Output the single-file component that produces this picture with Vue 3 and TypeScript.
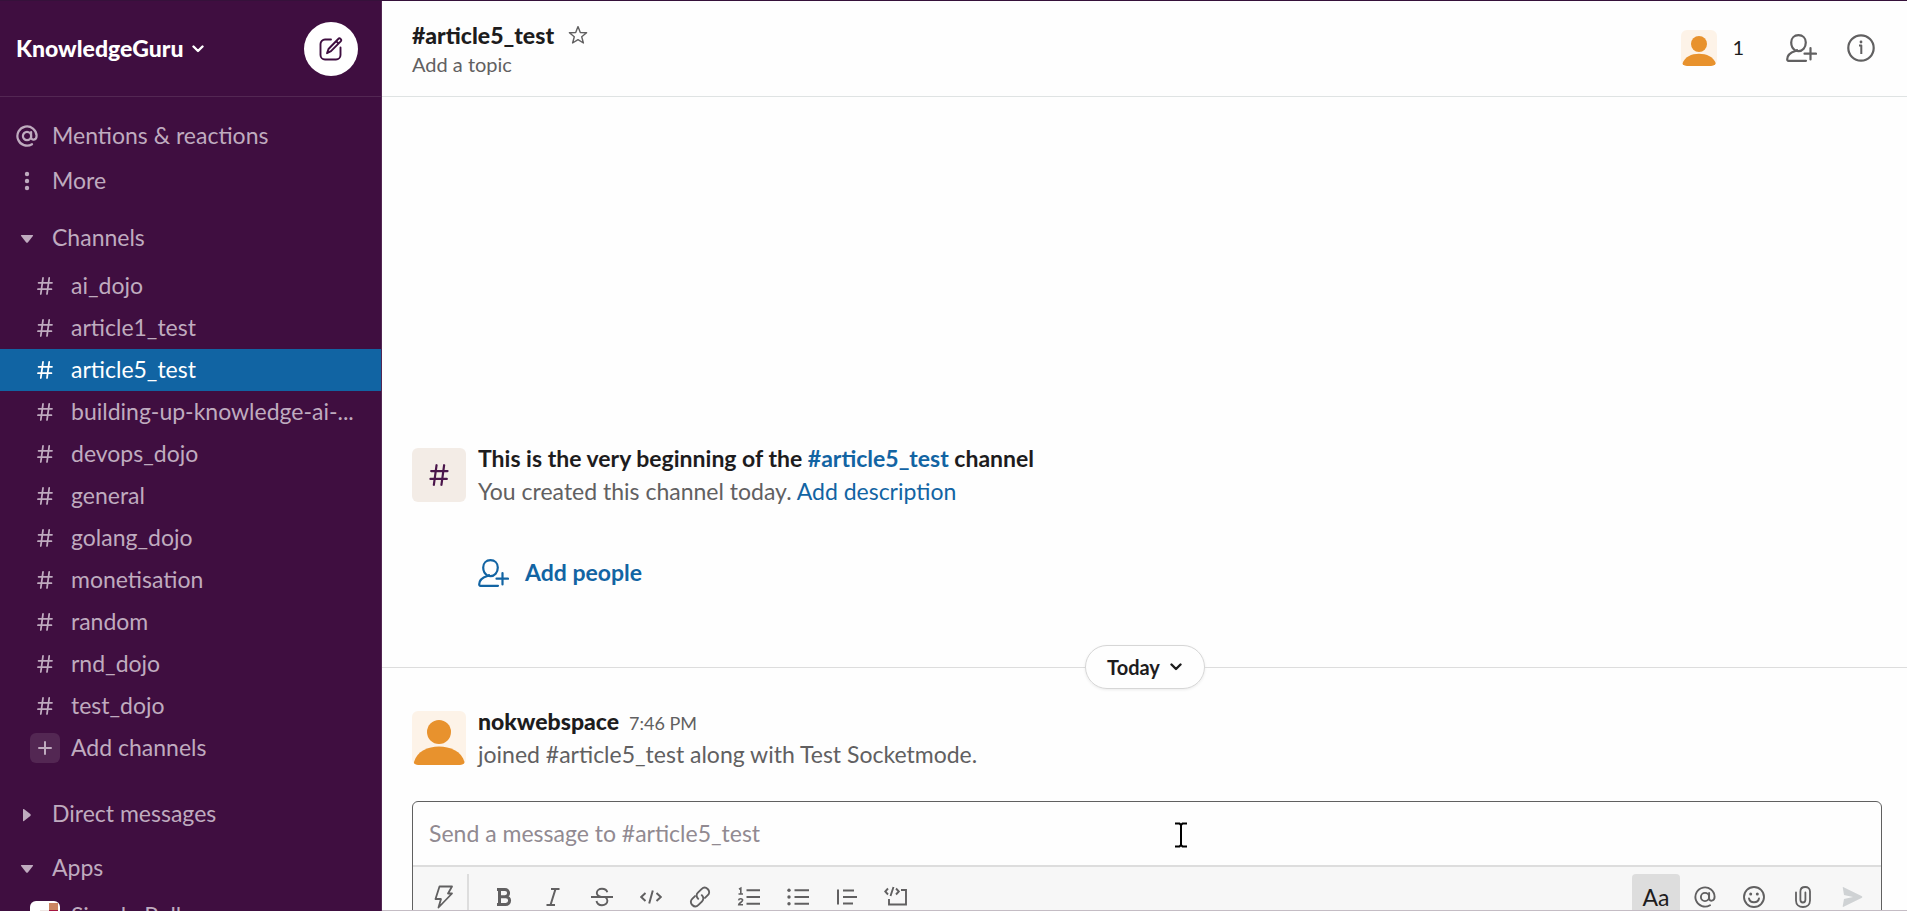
<script setup lang="ts">
import { ref } from 'vue'

interface Channel {
  name: string
  label: string
}

const channels: Channel[] = [
  'ai_dojo',
  'article1_test',
  'article5_test',
  'building-up-knowledge-ai-...',
  'devops_dojo',
  'general',
  'golang_dojo',
  'monetisation',
  'random',
  'rnd_dojo',
  'test_dojo',
].map((label) => ({ name: label.replace(/\W+/g, '-'), label }))

const active = ref('article5_test')
const draft = ref('')
</script>

<template>
  <div class="app">
    <svg class="defs" width="0" height="0" aria-hidden="true">
      <symbol id="hash" viewBox="0 0 16 18">
        <path d="M6 1 3.8 17M12.2 1 10 17M1.6 5.8H15M1 12.2H14.4" fill="none" stroke="currentColor" stroke-linecap="round" />
      </symbol>
      <symbol id="at" viewBox="0 0 22 22">
        <g fill="none" stroke="currentColor" stroke-linecap="round">
          <circle cx="11" cy="11" r="4.1" />
          <path d="M15.1 7v5.2c0 3.6 5.5 3.4 5.5-1.4A9.6 9.6 0 1 0 16 19.2" />
        </g>
      </symbol>
      <symbol id="chevron" viewBox="0 0 12 8">
        <path d="M1.5 1.5 6 6l4.500-4.500" fill="none" stroke="currentColor" stroke-width="2.400" stroke-linecap="round" stroke-linejoin="round" />
      </symbol>
      <symbol id="person-add" viewBox="0 0 31 28">
        <g fill="none" stroke="currentColor" stroke-width="2.200" stroke-linecap="round" stroke-linejoin="round">
          <path d="M20 26.800H2.500c-1 0-1.300-.6-1.300-1.500 0-4 3.300-6.800 8.300-8.300 1-.3 1.400-.6 1.500-1" />
          <path d="M9.500 16.600C6.600 14.800 5.200 11.600 5.200 8.600 5.200 4 8.300 1.200 12.500 1.200s7.300 2.800 7.300 7.400c0 5-3.300 8.600-7.300 8.600-1 0-2-.2-3-.6" />
          <path d="M24.500 14v11.500M18.500 19.700H30" />
        </g>
      </symbol>
      <symbol id="avatar" viewBox="0 0 54 54">
        <path d="M0 0h54v54H0z" fill="#fdf3e8" />
        <circle cx="27" cy="21" r="12" fill="#e8922d" />
        <path d="M2 51c3-11 14-15.500 25-15.500S49.500 40 52.500 51c.3 1.800-.5 3-2 3h-46c-1.700 0-2.800-1.200-2.500-3z" fill="#e8922d" />
      </symbol>
    </svg>

    <aside class="sidebar">
      <header class="side-head">
        <button class="team" type="button">
          KnowledgeGuru
          <svg class="chev"><use href="#chevron" /></svg>
        </button>
        <button class="compose" type="button" aria-label="New message">
          <svg width="24" height="24" viewBox="0 0 24 24" fill="none" stroke="currentColor" stroke-width="1.900" stroke-linecap="round" stroke-linejoin="round">
            <path d="M12 2.500H6A4.500 4.500 0 0 0 1.500 7v11A4.500 4.500 0 0 0 6 22.500h11a4.500 4.500 0 0 0 4.500-4.500v-7.500" />
            <path d="M8 16.200 9.500 12 19.200 2a1.600 1.600 0 0 1 2.500 2.300L12 14.200zM17.200 4.200l2.300 2.300" />
          </svg>
        </button>
      </header>

      <nav class="side-nav" aria-label="Workspace">
        <a class="top-link" href="#mentions">
          <span class="lead"><svg class="at bold" width="22" height="22"><use href="#at" /></svg></span>Mentions &amp; reactions
        </a>
        <a class="top-link" href="#more">
          <span class="lead">
            <svg width="6" height="20" viewBox="0 0 6 20" fill="currentColor"><circle cx="3" cy="3" r="2.200" /><circle cx="3" cy="10" r="2.200" /><circle cx="3" cy="17" r="2.200" /></svg>
          </span>More
        </a>

        <section class="group">
          <button class="group-head" type="button" aria-expanded="true">
            <span class="lead"><svg width="14" height="10" viewBox="0 0 14 10"><path d="M1.500 1h11q1 0 .4.900L8 8.300q-1 1-2 0L1.100 1.900Q.5 1 1.500 1z" fill="currentColor" /></svg></span>Channels
          </button>
          <ul class="rows">
            <li v-for="c in channels" :key="c.name">
              <a class="row" :class="{ on: c.name === active }" :href="'#' + c.name" @click="active = c.name">
                <span class="mark"><svg class="hash" width="16" height="18"><use href="#hash" /></svg></span>{{ c.label }}
              </a>
            </li>
            <li>
              <button class="row" type="button">
                <span class="mark plus"><svg width="14" height="14" viewBox="0 0 14 14"><path d="M7 1v12M1 7h12" stroke="currentColor" stroke-width="2" stroke-linecap="round" /></svg></span>Add channels
              </button>
            </li>
          </ul>
        </section>

        <section class="group later">
          <button class="group-head" type="button" aria-expanded="false">
            <span class="lead"><svg width="10" height="14" viewBox="0 0 10 14"><path d="M1 1.500v11q0 1 .9.400L8.300 8q1-1 0-2L1.900 1.100Q1 .5 1 1.500z" fill="currentColor" /></svg></span>Direct messages
          </button>
        </section>

        <section class="group apps">
          <button class="group-head" type="button" aria-expanded="true">
            <span class="lead"><svg width="14" height="10" viewBox="0 0 14 10"><path d="M1.500 1h11q1 0 .4.900L8 8.300q-1 1-2 0L1.100 1.900Q.5 1 1.500 1z" fill="currentColor" /></svg></span>Apps
          </button>
          <ul class="rows">
            <li>
              <a class="row" href="#simple-poll">
                <span class="mark poll">
                  <svg width="30" height="30" viewBox="0 0 30 30"><path d="M0 0h30v30H0z" fill="#fff" /><path d="M19 2h9v7h-9z" fill="#cb8562" /><path d="M19 9h9v19h-9z" fill="#a51540" /><path d="M10 9h9v19h-9z" fill="#eee6e2" /></svg>
                </span>Simple Poll
              </a>
            </li>
          </ul>
        </section>
      </nav>
    </aside>

    <main class="main">
      <header class="head">
        <div class="head-text">
          <div class="head-line">
            <h1 class="title">#article5_test</h1>
            <button class="star" type="button" aria-label="Star channel">
              <svg width="20" height="20" viewBox="0 0 20 20"><path d="m10 1.600 2.300 5.900 6.300.3-4.900 4 1.700 6.200L10 14.600 4.600 18l1.700-6.200-4.900-4 6.300-.3z" fill="none" stroke="currentColor" stroke-width="1.400" stroke-linejoin="round" /></svg>
            </button>
          </div>
          <button class="topic" type="button">Add a topic</button>
        </div>
        <button class="members" type="button" aria-label="1 member">
          <svg class="avatar" width="36" height="36"><use href="#avatar" /></svg>1
        </button>
        <button class="head-icon invite" type="button" aria-label="Add people to channel">
          <svg width="31" height="28"><use href="#person-add" /></svg>
        </button>
        <button class="head-icon" type="button" aria-label="Channel details">
          <svg width="28" height="28" viewBox="0 0 28 28" fill="none" stroke="currentColor"><circle cx="14" cy="14" r="12.700" stroke-width="2.200" /><path d="M12 11.500h2.300v8.500" stroke-width="2" stroke-linejoin="round" /><circle cx="14" cy="8" r="1.400" fill="currentColor" stroke="none" /></svg>
        </button>
      </header>

      <div class="feed">
        <section class="entry">
          <span class="tile"><svg class="hash" width="20" height="22"><use href="#hash" /></svg></span>
          <div class="entry-text">
            <h2 class="lead-line">This is the very beginning of the <a href="#article5_test">#article5_test</a> channel</h2>
            <p class="muted">You created this channel today. <a href="#description">Add description</a></p>
            <button class="add-people" type="button"><svg width="31" height="28"><use href="#person-add" /></svg>Add people</button>
          </div>
        </section>

        <div class="divider">
          <button class="day" type="button">Today <svg class="chev"><use href="#chevron" /></svg></button>
        </div>

        <article class="entry">
          <svg class="avatar" width="54" height="54"><use href="#avatar" /></svg>
          <div class="entry-text">
            <div class="who"><strong>nokwebspace</strong><time>7:46 PM</time></div>
            <p class="muted">joined #article5_test along with Test Socketmode.</p>
          </div>
        </article>
      </div>

      <div class="dock">
        <form class="composer" @submit.prevent>
          <input v-model="draft" class="field" type="text" placeholder="Send a message to #article5_test" aria-label="Message #article5_test" />
          <svg class="ibeam" width="14" height="26" viewBox="0 0 14 26" aria-hidden="true"><path d="M1 1.500h4.500L7 3l1.500-1.500H13M7 3v20M1 24.500h4.500L7 23l1.500 1.500H13" fill="none" stroke="#000" stroke-width="2" /></svg>
          <div class="tools">
            <button class="tool bolt" type="button" aria-label="Shortcuts">
              <svg width="20" height="24" viewBox="0 0 20 24"><path d="M5.500 1.500h12.500l-4 7h4L4.500 22.500 7 14H1.500z" fill="none" stroke="currentColor" stroke-width="1.800" stroke-linejoin="round" /></svg>
            </button>
            <button class="tool" type="button" aria-label="Bold">
              <svg width="22" height="22" viewBox="0 0 22 22"><path d="M6.500 3.500h5.500a3.500 3.500 0 0 1 0 7.200H6.500zM6.500 10.700h6.200a3.900 3.900 0 0 1 0 7.800H6.500zM4 3.500h3M4 18.500h3" fill="none" stroke="currentColor" stroke-width="3" /></svg>
            </button>
            <button class="tool" type="button" aria-label="Italic">
              <svg width="22" height="22" viewBox="0 0 22 22"><path d="M9 3h8.500M4.500 19H13M13.500 3 8.500 19" fill="none" stroke="currentColor" stroke-width="2" /></svg>
            </button>
            <button class="tool" type="button" aria-label="Strikethrough">
              <svg width="22" height="22" viewBox="0 0 22 22" fill="none" stroke="currentColor" stroke-width="1.900"><path d="M0 11h22M16.300 6.200C15.500 3.600 13.700 2.800 11 2.800c-3 0-5.200 1.600-5.200 4.200 0 2.400 2 3.300 4.500 4M5.500 15c.6 3 2.500 4.200 5.500 4.200s5.400-1.700 5.400-4.400c0-1.700-.8-2.900-2.400-3.800" /></svg>
            </button>
            <button class="tool" type="button" aria-label="Code">
              <svg width="22" height="22" viewBox="0 0 22 22" fill="none" stroke="currentColor" stroke-width="2"><path d="M5.500 7 1.200 11l4.300 4M16.500 7l4.300 4-4.300 4M12.800 4.500 9.200 17.500" /></svg>
            </button>
            <button class="tool" type="button" aria-label="Link">
              <svg width="22" height="22" viewBox="0 0 22 22" fill="none" stroke="currentColor" stroke-width="1.900" stroke-linecap="round"><path d="M9.200 12.800c-2-2-2-4.400-.3-6.100l3.600-3.600c2-2 4.500-1.800 6.200-.1 1.900 1.900 1.900 4.300.1 6.100L16 11.900" /><path d="M12.800 9.200c2 2 2 4.400.3 6.100l-3.600 3.600c-2 2-4.500 1.800-6.200.1-1.900-1.900-1.900-4.300-.1-6.100L6 10.100" /></svg>
            </button>
            <button class="tool" type="button" aria-label="Ordered list">
              <svg width="24" height="22" viewBox="0 0 24 22" fill="none" stroke="currentColor"><path d="M9.500 4.200H23M9.500 11H23M9.500 17.800H23" stroke-width="2" /><path d="M2 3.300 3.800 2.200V8M1.500 8H6M1.600 14.300c.3-2.200 4-2 4 0 0 1.600-3.800 2.800-3.900 4.500H6" stroke-width="1.600" /></svg>
            </button>
            <button class="tool" type="button" aria-label="Bulleted list">
              <svg width="22" height="22" viewBox="0 0 22 22"><path d="M7.500 4.200H22M7.500 11H22M7.500 17.800H22" stroke="currentColor" stroke-width="2" /><g fill="currentColor"><circle cx="2" cy="4.200" r="1.700" /><circle cx="2" cy="11" r="1.700" /><circle cx="2" cy="17.800" r="1.700" /></g></svg>
            </button>
            <button class="tool" type="button" aria-label="Quote">
              <svg width="22" height="22" viewBox="0 0 22 22"><path d="M2 3.500v15M7 4.500h11M7 11h14M7 17.500h10" stroke="currentColor" stroke-width="2" /></svg>
            </button>
            <button class="tool" type="button" aria-label="Code block">
              <svg width="24" height="22" viewBox="0 0 24 22" fill="none" stroke="currentColor" stroke-width="1.900"><path d="M4 2.500 1.200 5.500 4 8.500M12 2.500l2.800 3L12 8.500M9.500 1 6.500 10M17 4h5v14.500H5V13" /></svg>
            </button>
            <span class="push"></span>
            <button class="tool format" type="button" aria-pressed="true" aria-label="Formatting">Aa</button>
            <button class="tool" type="button" aria-label="Mention someone"><svg class="at" width="22" height="22"><use href="#at" /></svg></button>
            <button class="tool" type="button" aria-label="Emoji">
              <svg width="22" height="22" viewBox="0 0 22 22" fill="none" stroke="currentColor" stroke-width="1.900"><circle cx="11" cy="11" r="10" /><path d="M6 12.500c1 5 9 5 10 0" stroke-linecap="round" /><g fill="currentColor" stroke="none"><circle cx="7.700" cy="8" r="1.500" /><circle cx="14.300" cy="8" r="1.500" /></g></svg>
            </button>
            <button class="tool" type="button" aria-label="Attach file">
              <svg width="18" height="22" viewBox="0 0 18 22" fill="none" stroke="currentColor" stroke-width="1.800" stroke-linecap="round"><path d="M2 6.500v8C2 18.500 5 21 9 21s7-2.500 7-6.500v-9C16 2.700 14 1 11.200 1S6.400 2.700 6.400 5.500v8.300c0 3.600 5 3.600 5 0V6.500" /></svg>
            </button>
            <button class="tool send" type="submit" aria-label="Send">
              <svg width="22" height="22" viewBox="0 0 22 22"><path d="M1.800 1.700Q1.500.800 2.600 1.200L20.500 10q1.700 1 0 2L2.600 20.800q-1.100.4-.9-.6L3 13l9-2-9-2z" fill="currentColor" /></svg>
            </button>
          </div>
        </form>
      </div>
    </main>
  </div>
</template>

<style>
body {
  margin: 0;
}
</style>

<style scoped>
.app {
  display: flex;
  height: 100vh;
  box-sizing: border-box;
  overflow: hidden;
  border-top: 1px solid #35113a;
  background: #fefefe;
  color: #1d1c1d;
  font-family: Lato, "Liberation Sans", sans-serif;
  font-size: 23px;
  line-height: 33px;
}
.defs {
  position: absolute;
}
button {
  padding: 0;
  border: 0;
  background: none;
  color: inherit;
  font: inherit;
  text-align: left;
  cursor: pointer;
}
a {
  color: #1264a3;
  text-decoration: none;
}
svg {
  display: block;
  flex: none;
}
.chev {
  width: 12px;
  height: 8px;
}
.hash {
  stroke-width: 1.8;
}
.at {
  stroke-width: 1.9;
}
.at.bold {
  stroke-width: 2.2;
}
.sidebar {
  flex: none;
  width: 382px;
  box-sizing: border-box;
  border-right: 1px solid #532753;
  background: #3f0e40;
  color: #bfabbf;
}
.side-head {
  display: flex;
  align-items: center;
  justify-content: space-between;
  height: 96px;
  box-sizing: border-box;
  padding: 0 23px 0 16px;
  border-bottom: 1px solid #532753;
}
.team {
  display: flex;
  align-items: center;
  gap: 8px;
  color: #fff;
  font-weight: 900;
}
.compose {
  display: flex;
  align-items: center;
  justify-content: center;
  width: 54px;
  height: 54px;
  border-radius: 50%;
  background: #fff;
  color: #3f0e40;
}
.side-nav {
  padding-top: 16px;
}
.top-link,
.group-head,
.row {
  display: flex;
  align-items: center;
  width: 100%;
  height: 42px;
  box-sizing: border-box;
  padding-bottom: 2px;
  color: inherit;
  white-space: nowrap;
}
.top-link {
  height: 45px;
  padding-bottom: 0;
}
.lead {
  display: flex;
  justify-content: center;
  width: 54px;
  margin-right: -2px;
}
.group-head .lead {
  padding-top: 4px;
}
.group {
  margin-top: 14px;
}
.later {
  margin-top: 24px;
}
.apps {
  margin-top: 12px;
}
.rows {
  margin: 6px 0 0;
  padding: 0;
  list-style: none;
}
.row {
  padding-left: 30px;
  gap: 11px;
}
.row.on {
  background: #1164a3;
  color: #fff;
}
.mark {
  display: flex;
  align-items: center;
  justify-content: center;
  width: 30px;
  height: 30px;
  margin-top: 2px;
  border-radius: 6px;
  overflow: hidden;
}
.plus {
  background: #532753;
}
.main {
  display: flex;
  flex: 1;
  flex-direction: column;
  min-width: 0;
  border-bottom: 1px solid #c4bcc4;
}
.head {
  display: flex;
  flex: none;
  align-items: center;
  height: 96px;
  box-sizing: border-box;
  padding: 0 32px 2px 30px;
  border-bottom: 1px solid #dfe3e3;
  color: #616061;
}
.head-text {
  flex: 1;
  margin-top: 4px;
}
.head-line {
  display: flex;
  align-items: center;
  gap: 14px;
  height: 28px;
}
.title {
  margin: 0;
  color: #1d1c1d;
  font-size: 23px;
  font-weight: 900;
  line-height: 28px;
}
.topic {
  display: block;
  font-size: 20px;
  line-height: 30px;
}
.members {
  display: flex;
  align-items: center;
  gap: 15px;
  color: #1d1c1d;
  font-size: 20px;
}
.avatar {
  border-radius: 6px;
}
.invite {
  margin: 0 30px 0 42px;
}
.feed {
  display: flex;
  flex: 1;
  flex-direction: column;
  justify-content: flex-end;
  padding-bottom: 30px;
}
.entry {
  display: flex;
  gap: 12px;
  padding: 0 30px;
}
.tile {
  display: flex;
  align-items: center;
  justify-content: center;
  width: 54px;
  height: 54px;
  border-radius: 6px;
  background: #f3ece6;
  color: #4a154b;
}
.entry-text {
  margin-top: -6px;
}
.lead-line,
.muted {
  margin: 0;
  font-size: 23px;
  line-height: 33px;
}
.lead-line {
  font-weight: 700;
}
.muted {
  color: #616061;
}
.add-people {
  display: flex;
  align-items: center;
  gap: 16px;
  margin-top: 48px;
  color: #1264a3;
  font-weight: 700;
}
.divider {
  display: flex;
  align-items: center;
  margin: 56px 0 22px;
}
.divider::before,
.divider::after {
  flex: 1;
  height: 1px;
  background: #dddddd;
  content: "";
}
.day {
  display: flex;
  align-items: center;
  justify-content: center;
  gap: 10px;
  width: 120px;
  height: 44px;
  box-sizing: border-box;
  border: 1px solid #d6d6d6;
  border-radius: 22px;
  box-shadow: 0 1px 3px #00000014;
  font-size: 20px;
  font-weight: 700;
}
.who {
  display: flex;
  align-items: baseline;
  gap: 10px;
  height: 33px;
}
.who strong {
  font-weight: 900;
}
.who time {
  color: #616061;
  font-size: 18px;
}
.dock {
  flex: none;
  height: 109px;
  padding: 0 25px 0 30px;
  overflow: hidden;
}
.composer {
  position: relative;
  border: 1px solid #606060;
  border-radius: 6px;
  overflow: hidden;
}
.field {
  display: block;
  width: 100%;
  height: 63px;
  box-sizing: border-box;
  padding: 0 16px 2px;
  border: 0;
  outline: 0;
  background: transparent;
  color: #1d1c1d;
  font: inherit;
}
.field::placeholder {
  color: #918a91;
  opacity: 1;
}
.ibeam {
  position: absolute;
  top: 20px;
  left: calc(52% - 2px);
}
.tools {
  display: flex;
  align-items: center;
  height: 60px;
  padding: 0 4px 0 8px;
  border-top: 2px solid #dddddd;
  background: #f7f7f7;
  color: #616061;
}
.tool {
  display: flex;
  align-items: center;
  justify-content: center;
  width: 48px;
  height: 46px;
  margin-right: 1px;
  border-radius: 4px;
}
.bolt {
  margin-right: 11px;
  border-radius: 0;
  border-right: 2px solid #dddddd;
}
.push {
  flex: 1;
}
.format {
  background: #dddddd;
  color: #1d1c1d;
}
.send {
  color: #cfd2d4;
}
</style>
